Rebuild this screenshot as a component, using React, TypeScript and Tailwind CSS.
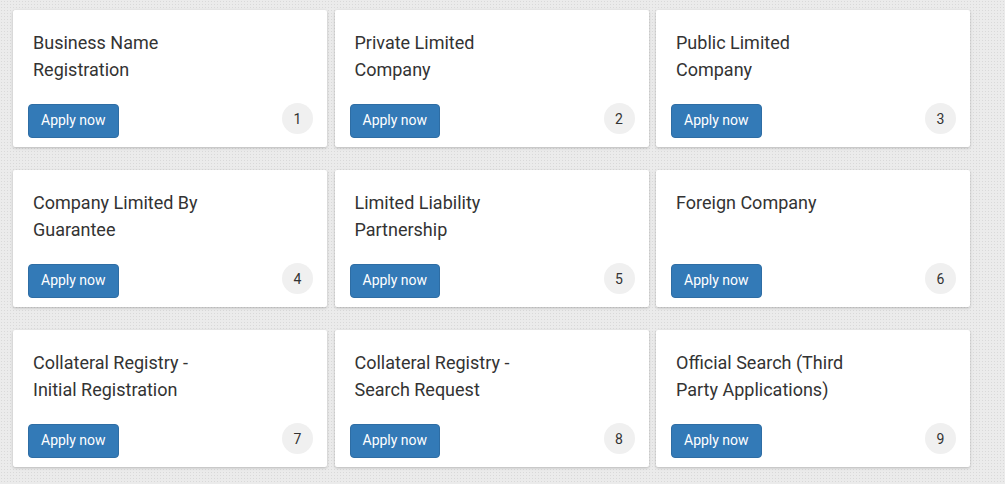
import React from "react";

const items = [
  ["Business Name", "Registration"],
  ["Private Limited", "Company"],
  ["Public Limited", "Company"],
  ["Company Limited By", "Guarantee"],
  ["Limited Liability", "Partnership"],
  ["Foreign Company"],
  ["Collateral Registry -", "Initial Registration"],
  ["Collateral Registry -", "Search Request"],
  ["Official Search (Third", "Party Applications)"],
];

export default function App() {
  return (
    <div
      className="w-full h-[484px] overflow-hidden bg-[#ebebeb] bg-[radial-gradient(#d9d9d9_0.8px,transparent_0.8px)] bg-[length:3px_3px] pt-[10px] pl-[13px]"
      style={{ fontFamily: "Roboto, 'Liberation Sans', sans-serif" }}
    >
      <div className="grid grid-cols-[314px_314px_314px] gap-x-[7.5px] gap-y-[23px]">
        {items.map((lines, i) => (
          <div
            key={i}
            className="h-[137px] bg-white rounded-[2px] shadow-[0_1px_3px_rgba(0,0,0,0.22)] flex flex-col justify-between pt-[19px] pb-[9px] pl-[15px] pr-[15px]"
          >
            <div className="pl-[5px] text-[18px] leading-[27px] text-[#333333]">
              {lines.map((l, j) => (
                <div key={j}>{l}</div>
              ))}
            </div>
            <div className="flex items-start justify-between h-[34px]">
              <button className="h-[34px] px-[12px] pb-[2px] bg-[#337ab7] border border-[#2e6da4] rounded-[4px] text-white text-[14px] leading-[20px]">
                Apply now
              </button>
              <div className="w-[31px] h-[31px] mt-[-1px] mr-[-1px] rounded-full bg-[#f0f0f0] flex items-center justify-center text-[14px] leading-none text-[#333333]">
                {i + 1}
              </div>
            </div>
          </div>
        ))}
      </div>
    </div>
  );
}
